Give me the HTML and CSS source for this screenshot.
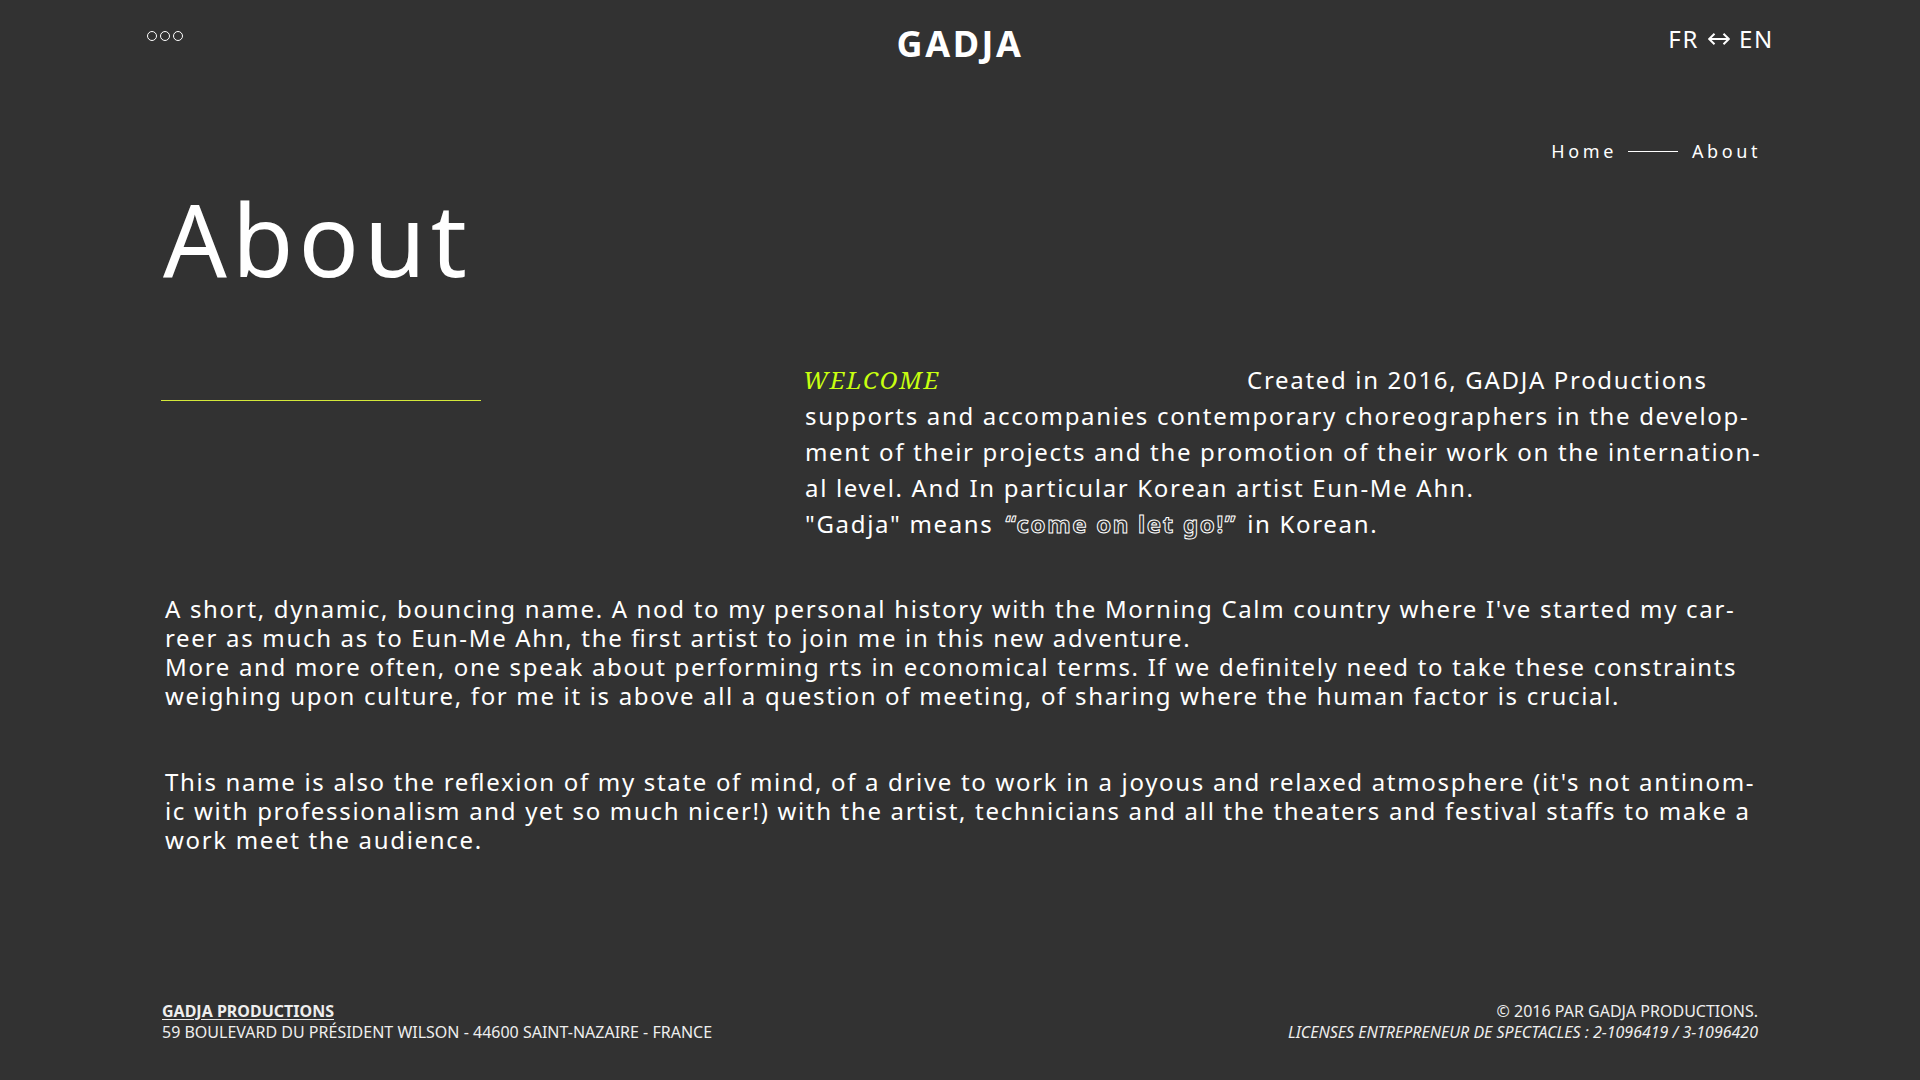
FILE: index.html
```html
<!DOCTYPE html>
<html lang="en">
<head>
<meta charset="utf-8">
<title>About – GADJA</title>
<link rel="stylesheet" href="styles.css">
</head>
<body>
<header class="topbar">
  <button class="menu" type="button" aria-label="Menu">
    <span class="ring"></span><span class="ring"></span><span class="ring"></span>
  </button>
  <a class="logo" href="#">GADJA</a>
  <nav class="lang" aria-label="Language">
    <a href="#">FR</a>
    <svg class="swap" viewBox="0 0 22 12" aria-hidden="true"><path d="M1 6H21M6.500 .8L1.200 6L6.500 11.200M15.500 .8L20.800 6L15.500 11.200"/></svg>
    <a href="#">EN</a>
  </nav>
</header>
<main class="page">
  <nav class="crumbs" aria-label="Breadcrumb">
    <a href="#">Home</a><span class="dash"></span><a href="#">About</a>
  </nav>
  <h1 class="title">About</h1>
  <section class="intro">
    <div class="rule"></div>
    <p class="lead"><em class="welcome">WELCOME</em>Created in 2016, GADJA Productions supports and accompanies contemporary choreographers in the develop&shy;ment of their projects and the promotion of their work on the internation&shy;al level. And In particular Korean artist Eun-Me Ahn.<br>"Gadja" means <strong class="outline">“come on let go!”</strong> in Korean.</p>
  </section>
  <section class="story">
    <p>A short, dynamic, bouncing name. A nod to my personal history with the Morning Calm country where I've started my car&shy;reer as much as to Eun-Me Ahn, the first artist to join me in this new adventure.<br>More and more often, one speak about performing rts in economical terms. If we definitely need to take these constraints weighing upon culture, for me it is above all a question of meeting, of sharing where the human factor is crucial.</p>
    <p>This name is also the reflexion of my state of mind, of a drive to work in a joyous and relaxed atmosphere (it's not antinom&shy;ic with professionalism and yet so much nicer!) with the artist, technicians and all the theaters and festival staffs to make a work meet the audience.</p>
  </section>
</main>
<footer class="footer">
  <p><a class="company" href="#">GADJA PRODUCTIONS</a><br>59 BOULEVARD DU PRÉSIDENT WILSON - 44600 SAINT-NAZAIRE - FRANCE</p>
  <p class="legal">© 2016 PAR GADJA PRODUCTIONS.<br><em>LICENSES ENTREPRENEUR DE SPECTACLES : 2-1096419 / 3-1096420</em></p>
</footer>
</body>
</html>
```
FILE: styles.css
```css
* {
  box-sizing: border-box;
}

body {
  margin: 0;
  min-height: 100vh;
  display: flex;
  flex-direction: column;
  background: #323232;
  color: #fff;
  font-family: "Noto Sans", sans-serif;
  font-size: 24px;
  line-height: 29px;
  letter-spacing: 0.07em;
  font-feature-settings: "liga";
}

a {
  color: inherit;
  text-decoration: none;
}

p,
h1 {
  margin: 0;
}

.topbar {
  display: grid;
  grid-template-columns: 1fr auto 1fr;
  align-items: start;
  padding: 22px 146px 0;
}

.menu {
  display: flex;
  gap: 3px;
  justify-self: start;
  padding: 9px 1px;
  border: 0;
  background: none;
}

.ring {
  width: 10px;
  height: 10px;
  border: 1px solid #fff;
  border-radius: 50%;
}

.logo {
  font-size: 36px;
  line-height: 44px;
  font-weight: 700;
  letter-spacing: 0.07em;
}

.lang {
  display: flex;
  justify-self: end;
  align-items: center;
  gap: 9px;
  padding-top: 2px;
}

.swap {
  width: 22px;
  height: 12px;
  fill: none;
  stroke: #fff;
  stroke-width: 2;
}

.page {
  flex: 1;
  padding: 72px 160px 0;
}

.crumbs {
  display: flex;
  justify-content: flex-end;
  align-items: center;
  margin-right: -1px;
  font-size: 18px;
  line-height: 26px;
  letter-spacing: 0.2em;
}

.dash {
  width: 50px;
  height: 1px;
  margin: 0 14px 0 11px;
  background: #fff;
}

.title {
  margin-top: 14px;
  padding-left: 3px;
  font-size: 100px;
  line-height: 120px;
  font-weight: 400;
  letter-spacing: 0.05em;
}

.intro {
  display: grid;
  grid-template-columns: 2fr 3fr;
  margin-top: 64px;
}

.rule {
  width: 50%;
  height: 1px;
  margin: 38px 0 0 1px;
  background: #d3e83a;
}

.lead {
  padding-left: 5px;
  line-height: 36px;
}

.welcome {
  margin: 0 307px 0 -2px;
  color: #c8ff10;
  font-family: "Noto Serif", "DejaVu Serif", serif;
}

.outline {
  padding: 0 2px 0 4px;
  color: transparent;
  -webkit-text-stroke: 1px #fff;
}

.story {
  display: grid;
  gap: 57px;
  margin-top: 52px;
  padding-left: 5px;
}

.footer {
  display: flex;
  justify-content: space-between;
  padding: 0 162px 37px;
  color: #eee;
  font-size: 16px;
  line-height: 21px;
  letter-spacing: 0;
}

.company {
  font-weight: 700;
  text-decoration: underline;
  text-underline-offset: 2px;
}

.legal {
  text-align: right;
}
```
